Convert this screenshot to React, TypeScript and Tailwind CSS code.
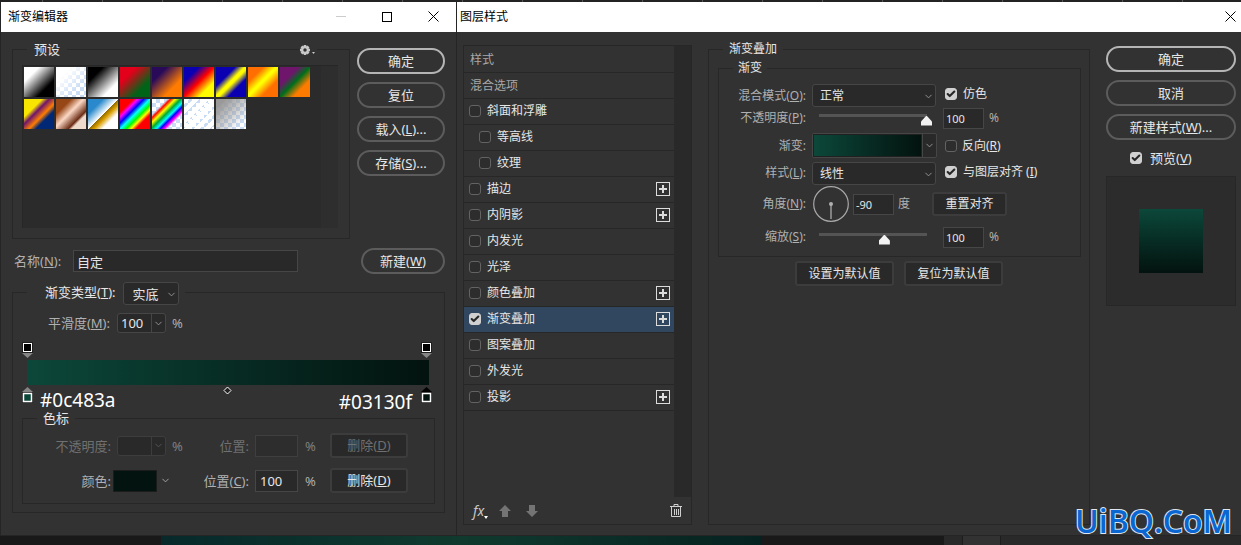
import React from 'react';
import { Check, ChevronDown } from 'lucide-react';

type Swatch = { name: string; fill: string };

const SWATCHES: Swatch[] = [
  { name: '前景到背景', fill: 'bg-[linear-gradient(135deg,#fff_25%,#000_72%)]' },
  { name: '前景到透明', fill: 'bg-[linear-gradient(135deg,#fff_25%,#ffffff00_75%)]' },
  { name: '黑白', fill: 'bg-[linear-gradient(135deg,#000_25%,#fff_75%)]' },
  { name: '红绿', fill: 'bg-[linear-gradient(135deg,#e2001a_28%,#006418_72%)]' },
  { name: '紫橙', fill: 'bg-[linear-gradient(135deg,#290a59_25%,#ff7c00_70%)]' },
  { name: '蓝红黄', fill: 'bg-[linear-gradient(135deg,#0a00b2_25%,#ff0000_50%,#fffc00_75%)]' },
  { name: '蓝黄蓝', fill: 'bg-[linear-gradient(135deg,#0a00b2_32%,#fffc00_48%,#fffc00_54%,#0a00b2_70%)]' },
  { name: '橙黄橙', fill: 'bg-[linear-gradient(135deg,#ff6e00_25%,#ffff00_46%,#ffff00_50%,#ff6e00_72%)]' },
  { name: '紫绿橙', fill: 'bg-[linear-gradient(135deg,#6f156c_30%,#006d1b_50%,#fd7c00_72%)]' },
  { name: '黄紫橙蓝', fill: 'bg-[linear-gradient(135deg,#f9e600_30%,#6f156c_42%,#fd7c00_58%,#002874_70%)]' },
  { name: '铜', fill: 'bg-[linear-gradient(135deg,#974616_25%,#fbd8c5_46%,#6c2e16_70%,#efdbcd_76%)]' },
  { name: '铬黄', fill: 'bg-[linear-gradient(135deg,#2989cc_25%,#fff_50%,#906a00_51%,#d99f00_60%,#fff_74%)]' },
  { name: '色谱', fill: 'bg-[linear-gradient(135deg,#f00_22%,#f0f_30%,#00f_40%,#0ff_50%,#0f0_60%,#ff0_68%,#f00_76%)]' },
  { name: '透明彩虹', fill: 'bg-[linear-gradient(135deg,#fff0_26%,#f00_31%,#ff0_39%,#0a3_48%,#0ff_57%,#00f_63%,#f0f_70%,#fff0_76%)]' },
  { name: '透明条纹', fill: 'bg-[repeating-linear-gradient(135deg,#fff_0px,#fff_4px,#fff0_4px,#fff0_7px)]' },
  { name: '中灰密度', fill: 'bg-[linear-gradient(135deg,#999_15%,#9998_50%,#9990_85%)]' },
];

type Effect = { name: string; indent?: boolean; plus?: boolean; on?: boolean };

const EFFECTS: Effect[] = [
  { name: '斜面和浮雕' },
  { name: '等高线', indent: true },
  { name: '纹理', indent: true },
  { name: '描边', plus: true },
  { name: '内阴影', plus: true },
  { name: '内发光' },
  { name: '光泽' },
  { name: '颜色叠加', plus: true },
  { name: '渐变叠加', plus: true, on: true },
  { name: '图案叠加' },
  { name: '外发光' },
  { name: '投影', plus: true },
];

const frame = 'min-w-0 border border-[#272727]';
const field = 'min-w-0 bg-[#292929] border border-[#464646] text-[#e6e6e6] outline-none';

const CheckBox = ({ id, on }: { id: string; on?: boolean }) => (
  <span className="grid size-3 shrink-0 place-items-center">
    <input
      id={id}
      type="checkbox"
      defaultChecked={on}
      className="peer col-start-1 row-start-1 size-3 appearance-none rounded-[3px] border border-[#636363] bg-[#2d2d2d] checked:border-[#d0d0d0] checked:bg-[#d0d0d0]"
    />
    <Check className="pointer-events-none invisible col-start-1 row-start-1 size-[10px] text-[#262626] peer-checked:visible" strokeWidth={5} />
  </span>
);

const Pill = ({ children, primary, className = '' }: { children: React.ReactNode; primary?: boolean; className?: string }) => (
  <button
    className={`h-[26px] shrink-0 rounded-full text-[13px] leading-none text-[#e6e6e6] ${primary ? 'border-2 border-[#b5b5b5]' : 'border-2 border-[#5c5c5c]'} ${className}`}
  >
    {children}
  </button>
);

const BoxButton = ({ children, disabled, className = '' }: { children: React.ReactNode; disabled?: boolean; className?: string }) => (
  <button
    disabled={disabled}
    className={`shrink-0 rounded-[3px] border-2 border-[#3c3c3c] bg-[#292929] leading-none text-[#e6e6e6] disabled:text-[#707070] ${className}`}
  >
    {children}
  </button>
);

const Select = ({ id, value, className = '' }: { id: string; value: string; className?: string }) => (
  <span className="relative shrink-0">
    <select
      id={id}
      className={`block h-[23px] appearance-none rounded-[3px] border border-[#464646] bg-[#292929] text-[#e6e6e6] outline-none ${className}`}
    >
      <option>{value}</option>
    </select>
    <ChevronDown className="pointer-events-none absolute top-[7px] right-[2px] size-[11px] text-[#999]" />
  </span>
);

const Combo = ({ id, value, disabled }: { id: string; value: string; disabled?: boolean }) => (
  <span className={`flex h-5 w-[49px] shrink-0 rounded-[3px] border bg-[#292929] ${disabled ? 'border-[#3d3d3d]' : 'border-[#464646]'}`}>
    <input id={id} disabled={disabled} defaultValue={value} className="w-[33px] min-w-0 bg-transparent pl-[3px] text-[#e6e6e6] outline-none" />
    <button
      aria-label="展开"
      disabled={disabled}
      className={`grid flex-1 place-items-center border-l ${disabled ? 'border-[#3d3d3d] text-[#555]' : 'border-[#464646] text-[#999]'}`}
    >
      <ChevronDown className="size-[11px]" />
    </button>
  </span>
);

const Slider = ({ id, value }: { id: string; value: number }) => (
  <input
    id={id}
    type="range"
    min={0}
    max={100}
    defaultValue={value}
    className="h-4 w-[119px] appearance-none bg-transparent [&::-webkit-slider-runnable-track]:h-[3px] [&::-webkit-slider-runnable-track]:bg-[linear-gradient(to_right,transparent_6px,#545454_6px,#545454_calc(100%-5px),transparent_calc(100%-5px))] [&::-webkit-slider-thumb]:mt-[2px] [&::-webkit-slider-thumb]:h-[10px] [&::-webkit-slider-thumb]:w-[11px] [&::-webkit-slider-thumb]:appearance-none [&::-webkit-slider-thumb]:bg-[#f2f2f2] [&::-webkit-slider-thumb]:[clip-path:polygon(50%_0,100%_60%,100%_100%,0_100%,0_60%)]"
  />
);

const OpacityStop = () => (
  <svg width="11" height="16" viewBox="0 0 11 16">
    <path d="M0 11h11L5.500 16z" fill="#858585" />
    <rect width="11" height="11" fill="#1e1e1e" />
    <rect x="1.500" y="1.500" width="8" height="8" fill="#000" stroke="#fff" />
  </svg>
);

const ColorStop = ({ color, tip }: { color: string; tip: string }) => (
  <svg width="11" height="17" viewBox="0 0 11 17" className="shrink-0">
    <path d="M0 6h11L5.500 1z" fill={tip} />
    <rect y="6" width="11" height="11" fill="#1e1e1e" />
    <rect x="1.500" y="7.500" width="8" height="8" fill={color} stroke="#fff" strokeWidth="1.500" />
  </svg>
);

const Gear = () => (
  <svg width="16" height="14" viewBox="0 0 16 14" fill="#c8c8c8">
    <g transform="translate(5 7)">
      {[0, 45, 90, 135].map((a) => (
        <rect key={a} x="-1.300" y="-5" width="2.600" height="10" transform={`rotate(${a})`} />
      ))}
      <circle r="3.900" />
      <circle r="1.700" fill="#323232" />
    </g>
    <path d="M12 9h3l-1.500 2z" />
  </svg>
);

const CloseIcon = () => (
  <svg width="11" height="11" viewBox="0 0 11 11" stroke="currentColor">
    <path d="M.5.5l10 10M10.500.5l-10 10" />
  </svg>
);

const PlusBox = ({ label }: { label: string }) => (
  <button aria-label={label} className="ml-auto mr-[3px]">
    <svg width="15" height="14" viewBox="0 0 15 14" fill="none">
      <rect x=".5" y=".5" width="13" height="13" stroke="#dcdcdc" />
      <path d="M7 3v8M3 7h8" stroke="#dcdcdc" strokeWidth="2" />
    </svg>
  </button>
);

const GradientEditor = () => (
  <section className="flex w-[456px] shrink-0 flex-col border-l border-[#252525]">
    <header className="flex h-[30px] items-center bg-white pb-px pl-[7px] text-black">
      <h1 className="flex-1 text-[12px]">渐变编辑器</h1>
      <button aria-label="最小化" className="grid w-[46px] place-items-center text-[#ccc]">
        <svg width="10" height="11" viewBox="0 0 10 11" stroke="currentColor"><path d="M0 5.500h10" /></svg>
      </button>
      <button aria-label="最大化" className="grid w-[46px] place-items-center">
        <svg width="10" height="10" viewBox="0 0 10 10" fill="none" stroke="currentColor"><rect x=".5" y=".5" width="9" height="9" /></svg>
      </button>
      <button aria-label="关闭" className="grid w-[46px] place-items-center"><CloseIcon /></button>
    </header>

    <div className="flex-1 px-[11px] pt-[9px] pb-[22px] text-[13px] leading-4 text-[#b0b0b0]">
      <div className="flex items-start gap-[7px]">
        <fieldset className={`relative flex-1 ${frame}`}>
          <legend className="ml-[14px] px-[7px] text-[#e6e6e6]">预设</legend>
          <button aria-label="预设选项" className="absolute -top-[14px] right-[32px] bg-[#323232] px-px"><Gear /></button>
          <div className="mr-[11px] mb-[10px] ml-[9px] mt-2 flex h-[163px] border-t border-l border-[#272727] bg-[#2b2b2b]">
            <div className="flex flex-1 flex-wrap content-start gap-[2px] pt-[1px] pl-px">
              {SWATCHES.map((s) => (
                <button
                  key={s.name}
                  aria-label={s.name}
                  className="size-[30px] bg-[repeating-conic-gradient(#c9dcf5_0_25%,#fff_0_50%)] bg-[length:8px_8px]"
                >
                  <span className={`block size-full ${s.fill}`} />
                </button>
              ))}
            </div>
            <div className="w-[17px] bg-[#2e2e2e]" />
          </div>
        </fieldset>
        <div className="mt-[7px] flex w-[88px] flex-col gap-2">
          <Pill primary>确定</Pill>
          <Pill>复位</Pill>
          <Pill>载入(<u>L</u>)...</Pill>
          <Pill>存储(<u>S</u>)...</Pill>
        </div>
      </div>

      <div className="mt-[9px] flex items-center">
        <label htmlFor="grad-name" className="ml-0.5 w-[59px]">名称(<u>N</u>):</label>
        <input id="grad-name" defaultValue="自定" className={`h-[22px] w-[225px] pl-[3px] ${field}`} />
        <Pill className="ml-auto w-[84px]">新建(<u>W</u>)</Pill>
      </div>

      <fieldset className={`mt-2 pb-2 ${frame}`}>
        <legend className="ml-[14px] flex h-[21px] items-start gap-[7px] pr-1.5 pl-[18px] text-[#e6e6e6]">
          <label htmlFor="grad-type" className="pt-[2px]">渐变类型(<u>T</u>):</label>
          <Select id="grad-type" value="实底" className="w-[56px] pl-[9px]" />
        </legend>
        <div className="flex items-center pt-[10px]">
          <label htmlFor="smooth" className="w-[97px] text-right">平滑度(<u>M</u>):</label>
          <span className="mr-1.5 ml-[7px] flex"><Combo id="smooth" value="100" /></span>
          %
        </div>

        <div className="mr-[11px] ml-[9px] mt-[9px]">
          <div className="flex justify-between pr-px">
            <OpacityStop />
            <OpacityStop />
          </div>
          <div className="mr-1 ml-[5px] mt-[2px] h-[25px] bg-linear-to-r from-[#0c483a] to-[#03130f]" />
          <div className="flex h-[25px] items-start justify-between pt-px pr-px text-[19px] leading-4 text-white">
            <ColorStop color="#0c483a" tip="#858585" />
            <span className="ml-[7px] pt-[6px]">#0c483a</span>
            <svg width="9" height="9" viewBox="0 0 9 9" className="mx-auto">
              <path d="M4.500 1L8 4.500 4.500 8 1 4.500z" fill="#222" stroke="#fff" />
            </svg>
            <span className="mr-[9px] pt-2">#03130f</span>
            <ColorStop color="#03130f" tip="#000" />
          </div>
        </div>

        <fieldset className={`mx-[9px] pb-[10px] ${frame}`}>
          <legend className="ml-[14px] px-[6px] text-[#e6e6e6]">色标</legend>
          <div className="grid grid-cols-[88px_77px_61px_81px_78px] items-center gap-y-[10px] pt-[7px]">
            <label htmlFor="stop-opacity" className="text-right text-[#707070]">不透明度:</label>
            <span className="flex items-center gap-1.5 pl-1.5 text-[#808080]"><Combo id="stop-opacity" value="" disabled />%</span>
            <label htmlFor="stop-pos" className="text-right text-[#707070]">位置:</label>
            <span className="flex items-center gap-[7px] pl-1.5 text-[#808080]">
              <input id="stop-pos" disabled className="h-[22px] w-[43px] border border-[#3f3f3f] bg-[#2d2d2d]" />%
            </span>
            <BoxButton disabled className="h-[25px]">删除(<u>D</u>)</BoxButton>

            <label htmlFor="stop-color" className="text-right">颜色:</label>
            <span className="flex items-center gap-[3px] pl-0.5">
              <button id="stop-color" className="h-[22px] w-[44px] border border-[#1c1c1c] bg-[#03130f]" />
              <ChevronDown className="size-[11px] text-[#aaa]" />
            </span>
            <label htmlFor="color-pos" className="text-right">位置(<u>C</u>):</label>
            <span className="flex items-center gap-[7px] pl-1.5">
              <input id="color-pos" defaultValue="100" className={`h-[22px] w-[43px] pl-1 ${field}`} />%
            </span>
            <BoxButton className="h-[25px]">删除(<u>D</u>)</BoxButton>
          </div>
        </fieldset>
      </fieldset>
    </div>
  </section>
);

const EffectList = () => (
  <div className="mt-1 flex w-[229px] shrink-0 flex-col border border-[#272727]">
    <div className="flex flex-1">
      <ul className="w-[210px] pt-px text-[#e6e6e6]">
        {['样式', '混合选项'].map((t) => (
          <li key={t} className="flex h-[26px] items-center border-b border-[#272727] pl-[6px] text-[#a8a8a8]">{t}</li>
        ))}
        {EFFECTS.map((e, i) => (
          <li
            key={e.name}
            className={`flex h-[26px] items-center gap-[6px] border-b border-[#272727] pb-px ${e.indent ? 'pl-[15px]' : 'pl-[5px]'} ${e.on ? 'bg-[#30475f]' : ''}`}
          >
            <CheckBox id={`effect-${i}`} on={e.on} />
            <label htmlFor={`effect-${i}`}>{e.name}</label>
            {e.plus && <PlusBox label={`添加${e.name}`} />}
          </li>
        ))}
      </ul>
      <div className="flex-1 bg-[#292929]" />
    </div>
    <div className="flex h-[27px] items-center pr-[9px] pl-[9px] text-[#c8c8c8]">
      <button aria-label="效果" className="flex items-end">
        <span className="text-[14px] leading-4 italic">fx</span>
        <svg width="4" height="3" viewBox="0 0 4 3"><path d="M0 0h4L2 3z" fill="#fff" /></svg>
      </button>
      <button aria-label="上移" className="ml-[11px]">
        <svg width="12" height="12" viewBox="0 0 12 12" fill="#747474"><path d="M6 0l6 6H9v6H3V6H0z" /></svg>
      </button>
      <button aria-label="下移" className="ml-[15px]">
        <svg width="12" height="12" viewBox="0 0 12 12" fill="#747474"><path d="M6 12l6-6H9V0H3v6H0z" /></svg>
      </button>
      <button aria-label="删除" className="ml-auto">
        <svg width="12" height="13" viewBox="0 0 12 13" fill="none" stroke="#d0d0d0">
          <path d="M0 2.500h12M4 2V.5h4V2M1.500 3v9.500h9V3M4.500 5v6M6.500 5v6M8.500 5v6" />
        </svg>
      </button>
    </div>
  </div>
);

const rowLabel = 'w-[87px] shrink-0 text-right';

const GradientOverlay = () => (
  <fieldset className={`flex-1 ${frame}`}>
    <legend className="ml-[14px] px-[6px] text-[#e6e6e6]">渐变叠加</legend>
    <fieldset className={`mr-2 ml-[9px] mt-[3px] pb-2 ${frame}`}>
      <legend className="ml-[14px] px-[5px] text-[#e6e6e6]">渐变</legend>

      <div className="mt-2 flex h-[23px] items-center">
        <label htmlFor="blend" className={rowLabel}>混合模式(<u>O</u>):</label>
        <span className="mr-[9px] ml-1.5 flex"><Select id="blend" value="正常" className="w-[124px] pl-[7px]" /></span>
        <span className="flex items-center gap-[6px] pb-[3px] text-[#e6e6e6]">
          <CheckBox id="dither" on />
          <label htmlFor="dither">仿色</label>
        </span>
      </div>

      <div className="flex h-[22px] items-center">
        <label htmlFor="opacity" className={rowLabel}>不透明度(<u>P</u>):</label>
        <span className="mr-[11px] ml-[7px] flex pb-[6px]"><Slider id="opacity" value={100} /></span>
        <input aria-label="不透明度数值" defaultValue="100" className={`h-[21px] w-[41px] pl-[2px] text-[11px] ${field}`} />
        <span className="ml-[5px]">%</span>
      </div>

      <div className="mt-[4px] flex h-[25px] items-center">
        <label htmlFor="gradient" className={rowLabel}>渐变:</label>
        <button id="gradient" className="mr-2 ml-1.5 flex h-[25px] w-[125px] rounded-[2px] border border-[#464646] bg-[#292929]">
          <span className="h-full flex-1 border border-[#202020] bg-linear-to-r from-[#0c483a] to-[#03130f]" />
          <span className="grid h-full w-[14px] place-items-center border-l border-[#464646] text-[#999]"><ChevronDown className="size-[11px]" /></span>
        </button>
        <span className="flex items-center gap-[5px] text-[#e6e6e6]">
          <CheckBox id="reverse" />
          <label htmlFor="reverse">反向(<u>R</u>)</label>
        </span>
      </div>

      <div className="mt-[4px] flex h-[23px] items-center">
        <label htmlFor="style" className={`${rowLabel} pb-[2px]`}>样式(<u>L</u>):</label>
        <span className="mr-[9px] ml-1.5 flex"><Select id="style" value="线性" className="w-[124px] pl-[7px]" /></span>
        <span className="flex items-center gap-[6px] pb-[3px] text-[#e6e6e6]">
          <CheckBox id="align" on />
          <label htmlFor="align">与图层对齐 (<u>I</u>)</label>
        </span>
      </div>

      <div className="mt-px flex h-9 items-center">
        <label htmlFor="angle" className={rowLabel}>角度(<u>N</u>):</label>
        <svg width="36" height="36" viewBox="0 0 36 36" className="mr-1 ml-[7px]">
          <circle cx="18" cy="18" r="17.300" fill="none" stroke="#a8a8a8" strokeWidth="1.200" />
          <path d="M18 18v15" stroke="#808080" strokeWidth="2" />
          <circle cx="18" cy="18" r="2" fill="#b0b0b0" />
        </svg>
        <input id="angle" defaultValue="-90" className={`h-[21px] w-[41px] pl-[2px] text-[11px] ${field}`} />
        <span className="ml-1">度</span>
        <BoxButton className="ml-[22px] h-6 w-[75px]">重置对齐</BoxButton>
      </div>

      <div className="mt-1 flex h-[22px] items-center">
        <label htmlFor="scale" className={rowLabel}>缩放(<u>S</u>):</label>
        <span className="mr-[11px] ml-[7px] flex pb-[6px]"><Slider id="scale" value={61} /></span>
        <input aria-label="缩放数值" defaultValue="100" className={`h-[21px] w-[41px] pl-[2px] text-[11px] ${field}`} />
        <span className="ml-[5px]">%</span>
      </div>
    </fieldset>
    <div className="mt-1 flex justify-center gap-[10px]">
      <BoxButton className="h-[25px] w-[99px]">设置为默认值</BoxButton>
      <BoxButton className="h-[25px] w-[99px]">复位为默认值</BoxButton>
    </div>
  </fieldset>
);

const LayerStyle = () => (
  <section className="flex min-w-0 flex-1 flex-col border-l border-[#252525]">
    <header className="flex h-[30px] items-center bg-white pb-px pl-[3px] text-black">
      <h1 className="flex-1 text-[12px]">图层样式</h1>
      <button aria-label="关闭" className="mr-[5px]"><CloseIcon /></button>
    </header>
    <div className="flex flex-1 gap-4 pt-[9px] pr-[5px] pb-[10px] pl-[6px] text-[12px] leading-4 text-[#b0b0b0]">
      <EffectList />
      <GradientOverlay />
      <div className="mt-[5px] flex w-[130px] shrink-0 flex-col">
        <div className="flex flex-col gap-2">
          <Pill primary>确定</Pill>
          <Pill>取消</Pill>
          <Pill>新建样式(<u>W</u>)...</Pill>
        </div>
        <div className="mt-[10px] flex h-4 items-center gap-2 pl-6 text-[13px] text-[#e6e6e6]">
          <CheckBox id="preview" on />
          <label htmlFor="preview">预览(<u>V</u>)</label>
        </div>
        <div className="mt-[10px] grid h-[130px] place-items-center border border-[#272727] bg-[#2c2c2c]">
          <div className="size-16 bg-linear-to-b from-[#0c483a] to-[#03130f]" />
        </div>
      </div>
    </div>
  </section>
);

const App: React.FC = () => (
  <div className="relative flex min-h-screen flex-col bg-[#323232] font-['Noto_Sans','Noto_Sans_CJK_SC',sans-serif]">
    <div className="h-[2px] bg-[repeating-linear-gradient(to_right,#232323_0px,#232323_42px,#555_42px,#555_43px,#232323_43px,#232323_60px)]" />
    <main className="flex flex-1">
      <GradientEditor />
      <LayerStyle />
    </main>
    <footer className="flex h-[10px] border-t border-[#252525] bg-[#292929]">
      <div className="w-[161px] bg-[#191919]" />
      <div className="w-[600px] bg-linear-to-r from-[#07292a] via-[#103a2e] to-[#062220]" />
      <div className="w-[183px] bg-[#191919]" />
      <div className="ml-[18px] w-[39px] border-x border-[#1d1d1d] bg-[#323232]" />
    </footer>
    <p className="absolute right-[9px] bottom-[3px] font-['Open_Sans',sans-serif] text-[32px] leading-[42px] font-semibold text-[#0a66d0] [-webkit-text-stroke:2px_#dfe6ee] [paint-order:stroke_fill]">
      UiBQ.CoM
    </p>
  </div>
);

export default App;
